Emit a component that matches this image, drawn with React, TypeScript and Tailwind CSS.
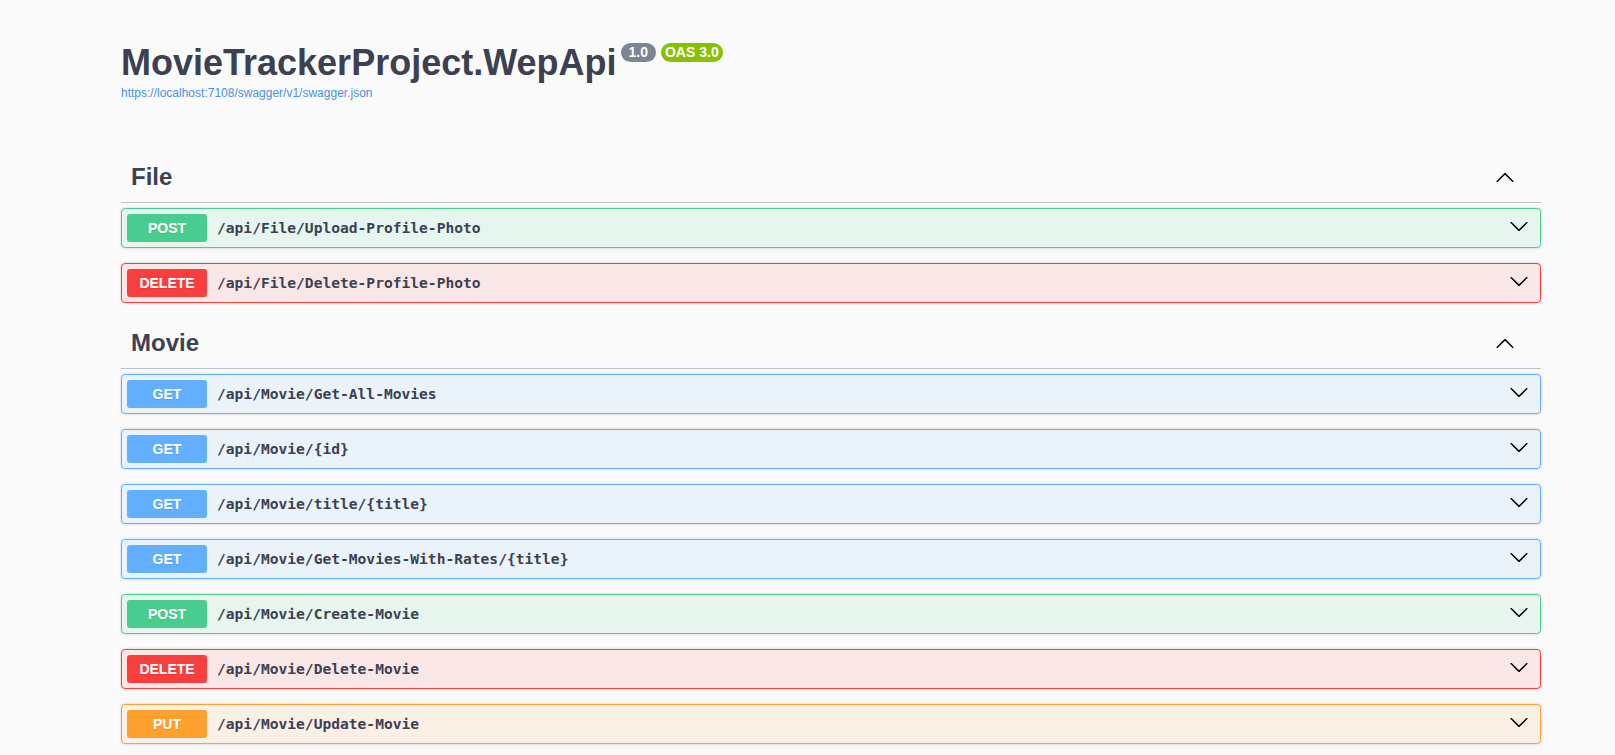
import React from "react";

const methodStyles: Record<string, { box: string; badge: string }> = {
  POST: { box: "border-[#49cc90] bg-[#49cc90]/10", badge: "bg-[#49cc90]" },
  DELETE: { box: "border-[#f93e3e] bg-[#f93e3e]/10", badge: "bg-[#f93e3e]" },
  GET: { box: "border-[#61affe] bg-[#61affe]/10", badge: "bg-[#61affe]" },
  PUT: { box: "border-[#fca130] bg-[#fca130]/10", badge: "bg-[#fca130]" },
};

const sections = [
  {
    name: "File",
    ops: [
      { method: "POST", path: "/api/File/Upload-Profile-Photo" },
      { method: "DELETE", path: "/api/File/Delete-Profile-Photo" },
    ],
  },
  {
    name: "Movie",
    ops: [
      { method: "GET", path: "/api/Movie/Get-All-Movies" },
      { method: "GET", path: "/api/Movie/{id}" },
      { method: "GET", path: "/api/Movie/title/{title}" },
      { method: "GET", path: "/api/Movie/Get-Movies-With-Rates/{title}" },
      { method: "POST", path: "/api/Movie/Create-Movie" },
      { method: "DELETE", path: "/api/Movie/Delete-Movie" },
      { method: "PUT", path: "/api/Movie/Update-Movie" },
    ],
  },
];

const ArrowUp = () => (
  <svg width="20" height="20" viewBox="0 0 20 20" className="fill-black">
    <path d="M17.418 14.908c.272.268.709.268.979 0s.271-.701 0-.969l-7.908-7.83c-.27-.268-.707-.268-.979 0l-7.908 7.83c-.27.268-.27.701 0 .969.271.268.709.268.979 0L10 7.767l7.418 7.141z" />
  </svg>
);

const ArrowDown = () => (
  <svg width="20" height="20" viewBox="0 0 20 20" className="fill-black">
    <path d="M17.418 6.109c.272-.268.709-.268.979 0s.271.701 0 .969l-7.908 7.83c-.27.268-.707.268-.979 0l-7.908-7.83c-.27-.268-.27-.701 0-.969.271-.268.709-.268.979 0L10 13.25l7.418-7.141z" />
  </svg>
);

const Operation = ({ method, path }: { method: string; path: string }) => {
  const s = methodStyles[method];
  return (
    <div
      className={`mb-[15px] flex h-[40px] items-center rounded-[4px] border p-[5px] shadow-[0_0_3px_rgba(0,0,0,0.19)] ${s.box}`}
    >
      <span
        className={`w-[80px] rounded-[3px] py-[6px] text-center text-[14px] leading-[16px] font-bold text-white [text-shadow:0_1px_0_rgba(0,0,0,0.1)] ${s.badge}`}
      >
        {method}
      </span>
      <span className="flex-1 px-[10px] font-['DejaVu_Sans_Mono',monospace] text-[14.6px] font-bold text-[#3b4151]">
        {path}
      </span>
      <span className="mr-[6px] mb-[4px]">
        <ArrowDown />
      </span>
    </div>
  );
};

export default function App() {
  return (
    <div className="min-h-screen bg-[#fafafa] font-['Liberation_Sans',Arial,sans-serif] text-[#3b4151]">
      <div className="w-[1541px] pt-[42px] pl-[121px]">
        <div className="flex items-start">
          <h2 className="text-[36px] leading-[41px] font-bold">MovieTrackerProject.WepApi</h2>
          <span className="mt-[1px] ml-[4px] rounded-full bg-[#7d8492] px-[8px] py-[2px] text-[14px] leading-[15px] font-bold text-white">
            1.0
          </span>
          <span className="mt-[1px] ml-[5px] rounded-full bg-[#89bf04] px-[4px] py-[2px] text-[14px] leading-[15px] font-bold text-white">
            OAS 3.0
          </span>
        </div>
        <a className="mt-[3px] block text-[12px] leading-[14px] text-[#4990e2]">
          https://localhost:7108/swagger/v1/swagger.json
        </a>

        <div className="mt-[52px]">
          {sections.map((section) => (
            <div key={section.name}>
              <div className="mb-[5px] flex h-[51px] items-center justify-between border-b border-[#3b4151]/30 pl-[10px]">
                <h3 className="text-[24px] leading-[30px] font-bold">{section.name}</h3>
                <span className="mr-[26px] mt-[-1px]">
                  <ArrowUp />
                </span>
              </div>
              {section.ops.map((op, i) => (
                <Operation key={i} method={op.method} path={op.path} />
              ))}
            </div>
          ))}
        </div>
      </div>
    </div>
  );
}
